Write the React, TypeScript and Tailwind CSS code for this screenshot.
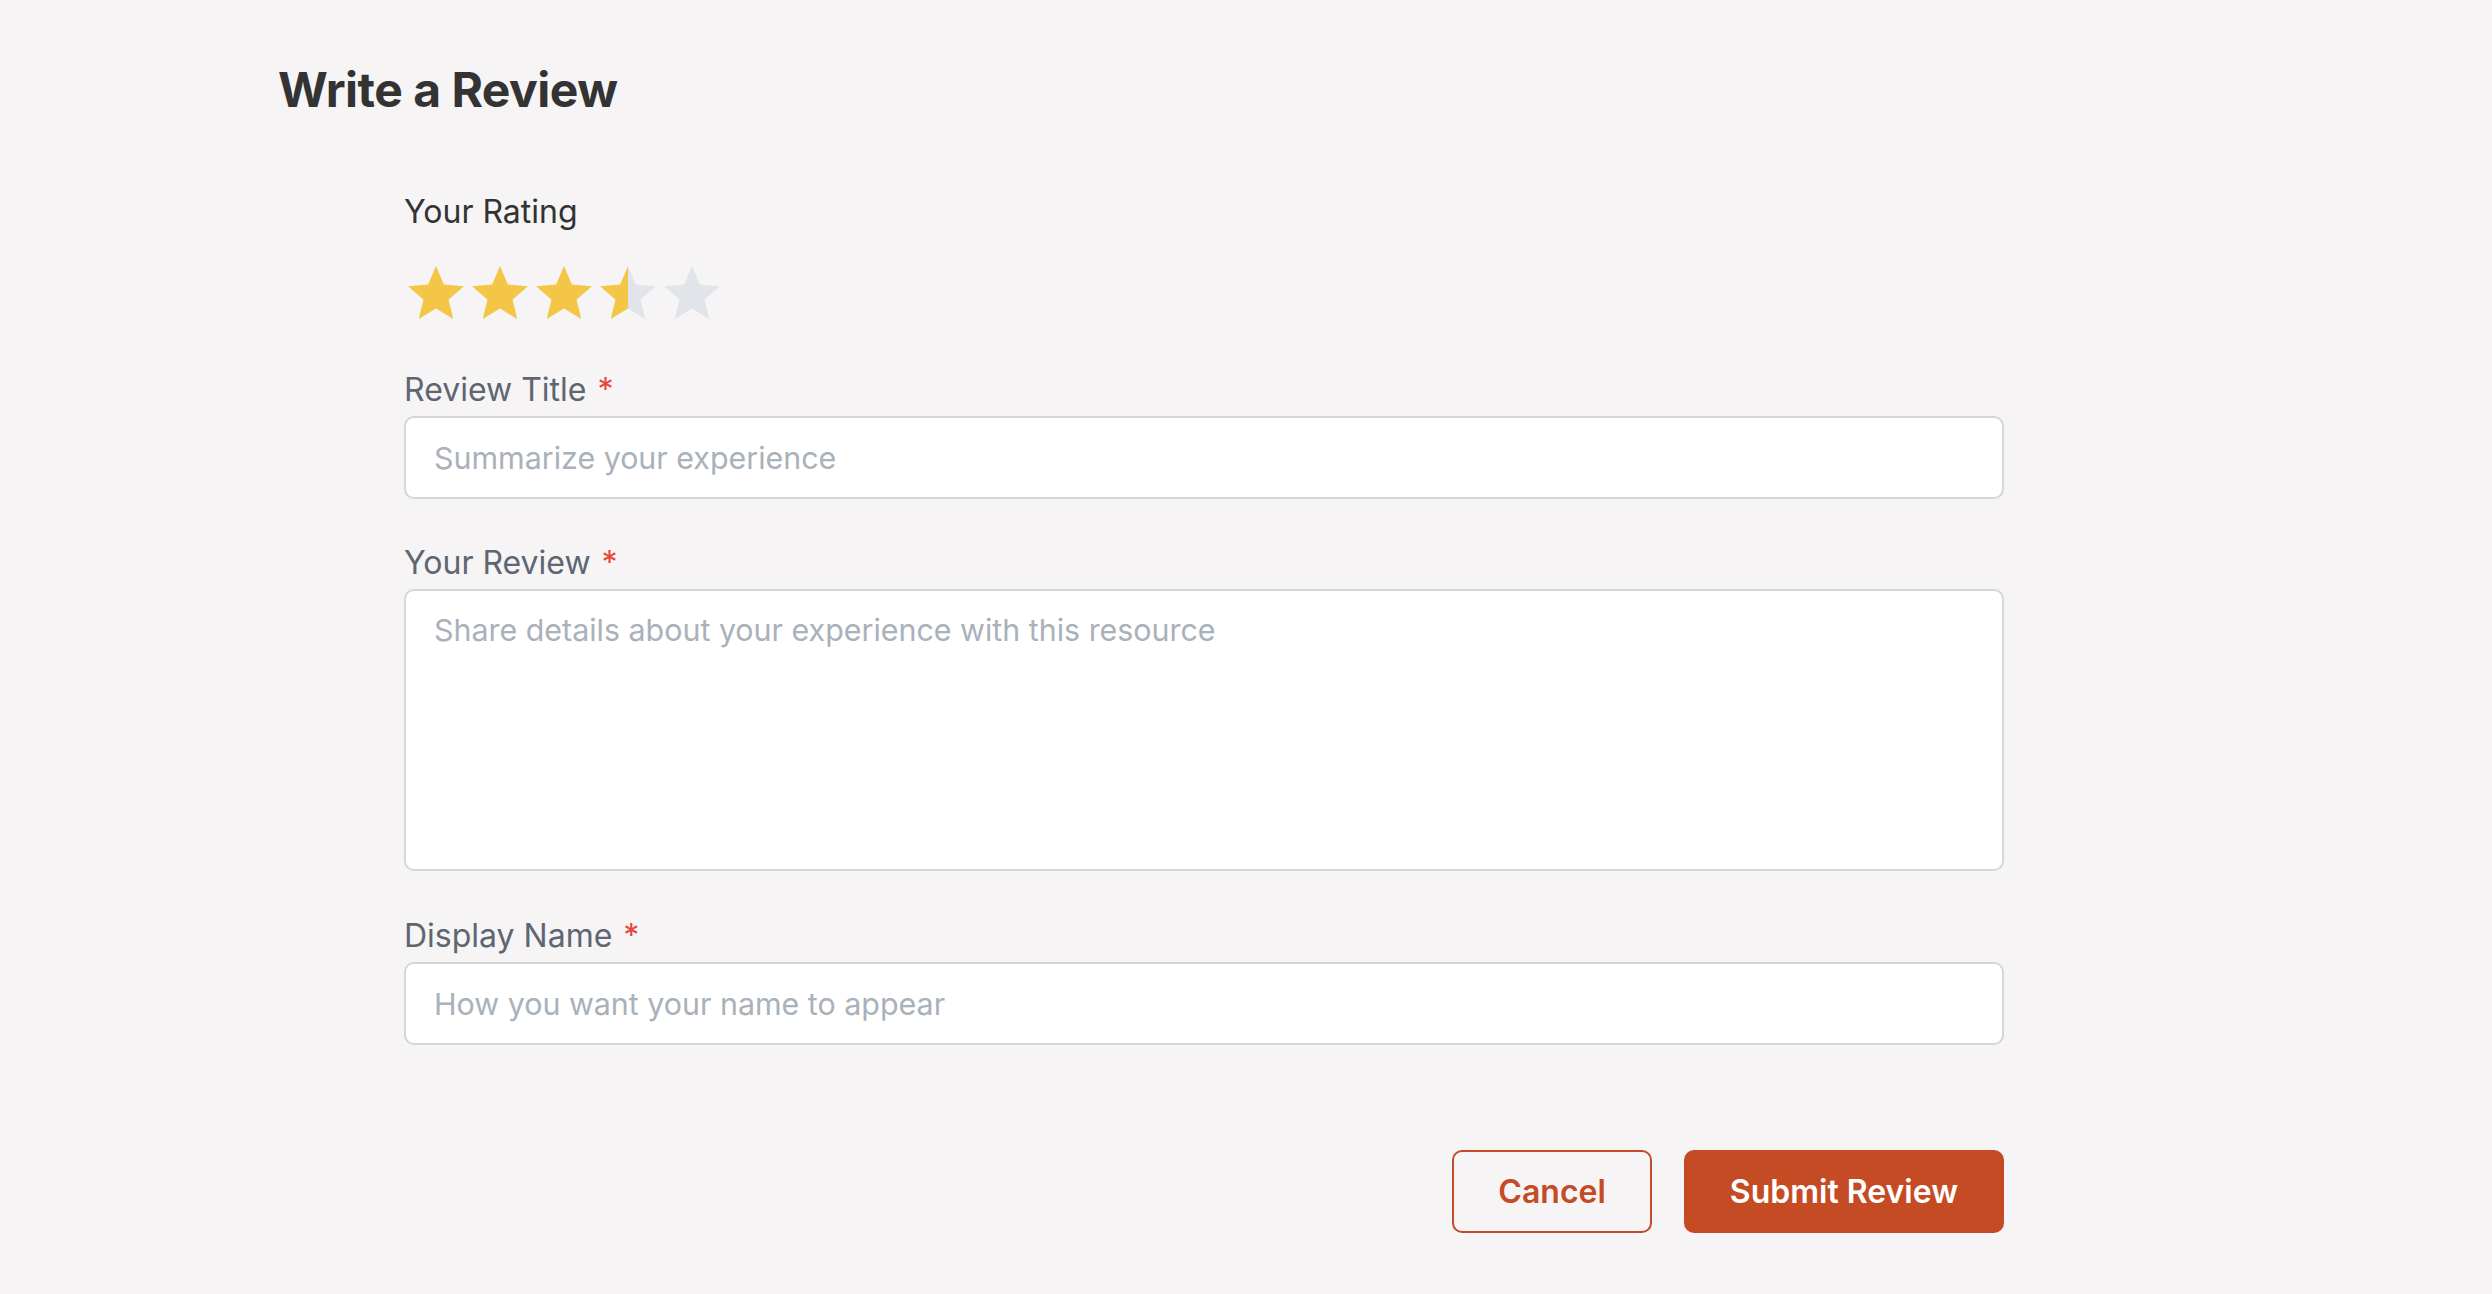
import React from "react";

const STAR =
  "M12 17.27L18.18 21l-1.64-7.03L22 9.24l-7.19-.61L12 2 9.19 8.63 2 9.24l5.46 4.73L5.82 21z";

function Star({ fill, id }: { fill: number; id: string }) {
  const yellow = "#F3C647";
  const gray = "#E1E4E9";
  return (
    <svg width="56" height="53" viewBox="2 2 20 19" className="block shrink-0">
      <defs>
        <linearGradient id={id} x1="2" x2="22" y1="0" y2="0" gradientUnits="userSpaceOnUse">
          <stop offset={`${fill * 100}%`} stopColor={yellow} />
          <stop offset={`${fill * 100}%`} stopColor={gray} />
        </linearGradient>
      </defs>
      <path d={STAR} fill={`url(#${id})`} />
    </svg>
  );
}

function Label({ children, required }: { children: React.ReactNode; required?: boolean }) {
  return (
    <label className="block text-[32px] leading-[44px] text-[#5d6671] mb-[4px]">
      {children}
      {required && <span className="text-[#e5493e] ml-[11px]">*</span>}
    </label>
  );
}

const fieldCls =
  "block w-full bg-white border-2 border-[#d3d7dc] rounded-[10px] px-[28px] py-[20px] text-[30.4px] leading-[39px] text-[#333] placeholder:text-[#a9b1ba] outline-none";

export default function App() {
  const ratings = [1, 1, 1, 0.5, 0];
  return (
    <div className="min-h-screen bg-[#f6f4f5] font-['Inter',sans-serif]">
      <div className="pl-[278px] pt-[61px] pb-[60px]">
        <h1 className="text-[48px] leading-[58px] font-bold text-[#333333] tracking-[-0.5px]">
          Write a Review
        </h1>
        <form className="ml-[126px] w-[1600px] mt-[71px] flex flex-col" onSubmit={(e) => e.preventDefault()}>
          <div className="text-[32px] leading-[44px] text-[#333333]">Your Rating</div>
          <div className="flex gap-[8px] mt-[32px] ml-[4px]">
            {ratings.map((f, i) => (
              <Star key={i} fill={f} id={`star-grad-${i}`} />
            ))}
          </div>

          <div className="mt-[49px]">
            <Label required>Review Title</Label>
            <input type="text" placeholder="Summarize your experience" className={`${fieldCls} h-[83px]`} />
          </div>

          <div className="mt-[42px]">
            <Label required>Your Review</Label>
            <textarea
              placeholder="Share details about your experience with this resource"
              className={`${fieldCls} h-[282px] resize-none`}
            />
          </div>

          <div className="mt-[43px]">
            <Label required>Display Name</Label>
            <input type="text" placeholder="How you want your name to appear" className={`${fieldCls} h-[83px]`} />
          </div>

          <div className="flex justify-end gap-[32px] mt-[105px]">
            <button
              type="button"
              className="border-2 border-[#c44b25] text-[#c44b25] bg-transparent rounded-[10px] px-[44px] py-[20px] text-[32px] leading-[39px] font-semibold"
            >
              Cancel
            </button>
            <button
              type="submit"
              className="border-2 border-[#c54b24] bg-[#c54b24] text-white rounded-[10px] px-[44px] py-[20px] text-[32px] leading-[39px] font-semibold"
            >
              Submit Review
            </button>
          </div>
        </form>
      </div>
    </div>
  );
}
